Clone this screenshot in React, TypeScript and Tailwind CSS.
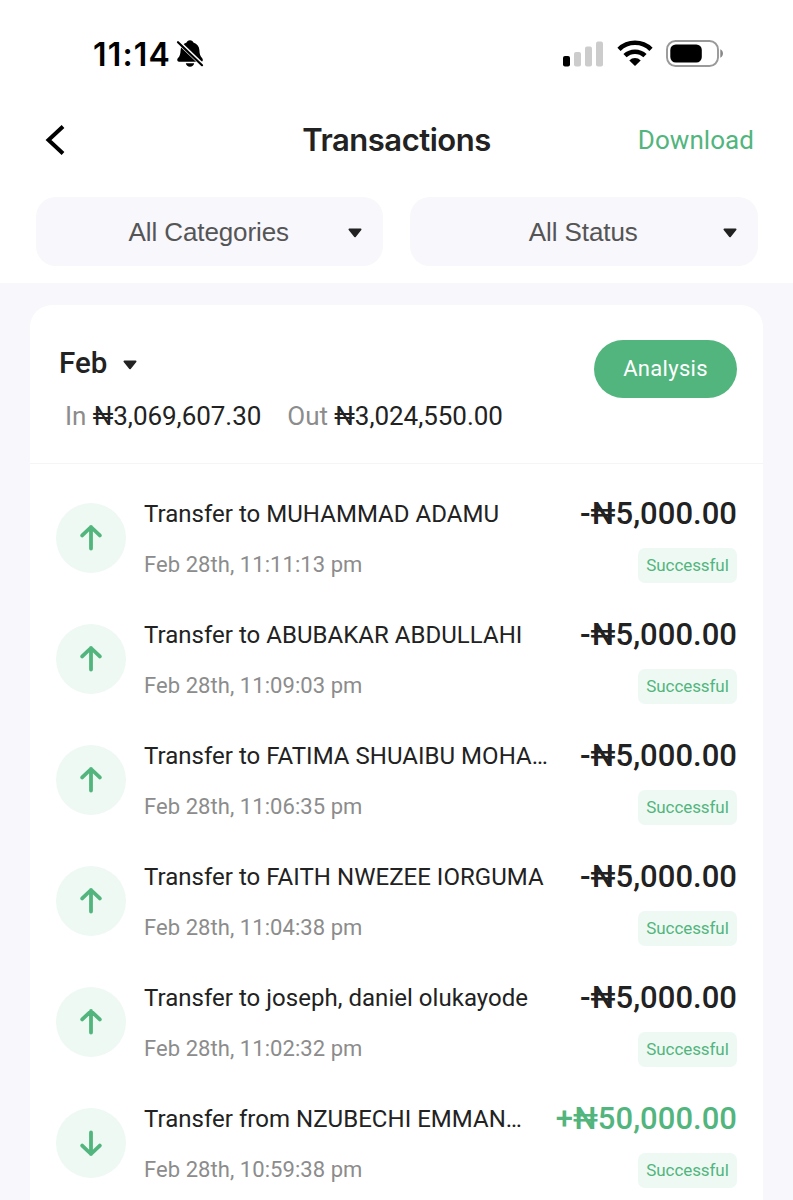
type Transaction = {
  title: string;
  time: string;
  amount: string;
  incoming?: boolean;
};

const TRANSACTIONS: Transaction[] = [
  { title: "Transfer to MUHAMMAD ADAMU", time: "Feb 28th, 11:11:13 pm", amount: "-₦5,000.00" },
  { title: "Transfer to ABUBAKAR ABDULLAHI", time: "Feb 28th, 11:09:03 pm", amount: "-₦5,000.00" },
  { title: "Transfer to FATIMA SHUAIBU MOHA…", time: "Feb 28th, 11:06:35 pm", amount: "-₦5,000.00" },
  { title: "Transfer to FAITH NWEZEE IORGUMA", time: "Feb 28th, 11:04:38 pm", amount: "-₦5,000.00" },
  { title: "Transfer to joseph, daniel olukayode", time: "Feb 28th, 11:02:32 pm", amount: "-₦5,000.00" },
  { title: "Transfer from NZUBECHI EMMAN…", time: "Feb 28th, 10:59:38 pm", amount: "+₦50,000.00", incoming: true },
];

function Caret() {
  return (
    <svg width="14" height="10" viewBox="0 0 14 10" className="mt-[3px] shrink-0">
      <path d="M1.4 1.4h11.2L7 8.4z" fill="#222" stroke="#222" strokeWidth="1.8" strokeLinejoin="round" />
    </svg>
  );
}

function BellOff() {
  return (
    <svg width="28" height="30" viewBox="0 0 28 30">
      <path d="M14 1.2c1.9 0 3.1 1 3.4 2.4 3.8 1.2 5.8 4 6 7.6.2 3.8.6 5.8 2.8 8 .9.9 1 3.5-1 3.5H3C1 22.7.9 20.2 1.8 19.3c2.2-2.3 2.6-4.3 2.8-8.1.2-3.6 2.2-6.4 6-7.6C10.9 2.2 12.1 1.2 14 1.2z" />
      <path d="M9.8 24.3h8.4c-.5 2.3-2 3.5-4.2 3.5s-3.7-1.2-4.2-3.5z" />
      <path d="M2.4 2.9 26.4 25.9" stroke="#fff" strokeWidth="4.2" />
      <path d="M2 3.2 26 26.2" stroke="#000" strokeWidth="2.2" strokeLinecap="round" />
    </svg>
  );
}

function StatusBar() {
  return (
    <div className="flex h-[108px] items-center justify-between pr-[69px] pl-[93px]">
      <div className="flex items-center gap-[5px]">
        <span className="pt-[2px] font-['Inter',sans-serif] text-[32px] leading-none font-semibold tracking-[1.2px] text-black">
          11:14
        </span>
        <BellOff />
      </div>
      <div className="flex items-center gap-[13px]">
        <svg width="41" height="26" viewBox="0 0 41 26">
          <rect x="0" y="15" width="7" height="10.5" rx="2" fill="#000" />
          <rect x="11" y="11" width="7" height="14.5" rx="2" fill="#ccc" />
          <rect x="22" y="5.5" width="7" height="20" rx="2" fill="#ccc" />
          <rect x="33" y="0.5" width="7" height="25" rx="2" fill="#ccc" />
        </svg>
        <svg width="36" height="27" viewBox="0 0 36 27" fill="none" stroke="#000" strokeWidth="4.6" className="mb-px">
          <path d="M2 9.3a23 23 0 0 1 32 0" />
          <path d="M8 15.7a14.5 14.5 0 0 1 20 0" />
          <path d="M12.3 20.4a8.2 8.2 0 0 1 11.4 0L18 26z" fill="#000" stroke="none" />
        </svg>
        <svg width="58" height="27" viewBox="0 0 58 27" className="mb-px">
          <rect x="1" y="1" width="51" height="25" rx="8.5" fill="none" stroke="#999" strokeWidth="1.9" />
          <rect x="4.3" y="4.5" width="31.5" height="18" rx="5.5" />
          <path d="M54.3 9.3v8.4c3.6-1.5 3.6-6.9 0-8.4z" fill="#888" />
        </svg>
      </div>
    </div>
  );
}

function FilterSelect({ label }: { label: string }) {
  return (
    <button className="flex h-[69px] w-[347.5px] items-center rounded-[20px] bg-[#f7f7fc] pr-[21px]">
      <span className="flex-1 pt-[2px] pl-[34px] text-center font-['Liberation_Sans',sans-serif] text-[26px] tracking-[-0.1px] text-[#555]">
        {label}
      </span>
      <Caret />
    </button>
  );
}

function DirectionIcon({ incoming }: { incoming?: boolean }) {
  return (
    <div className="flex size-[70px] shrink-0 items-center justify-center rounded-full bg-[#eef9f4]">
      <svg
        width="22"
        height="27"
        viewBox="0 0 22 27"
        fill="none"
        stroke="#52b57d"
        strokeWidth="3.8"
        strokeLinecap="round"
        strokeLinejoin="round"
        className={incoming ? "rotate-180" : ""}
      >
        <path d="M11 24.5V3M2.2 11.4 11 3l8.8 8.4" />
      </svg>
    </div>
  );
}

function TransactionRow({ title, time, amount, incoming }: Transaction) {
  return (
    <li className="flex h-[121.1px] items-center px-[26px]">
      <DirectionIcon incoming={incoming} />
      <div className="ml-[18px] flex min-w-0 flex-1 flex-col gap-[19px] pt-[3px] whitespace-nowrap">
        <span className="text-[24px] leading-[32px] tracking-[0.03px] text-[#222]">{title}</span>
        <span className="text-[22px] leading-[32px] tracking-[0.06px] text-[#8c8c8c]">{time}</span>
      </div>
      <div className="flex flex-col items-end gap-[15px] pt-[2px]">
        <span
          className={`text-[31px] leading-[38px] font-medium tracking-[0.03px] ${incoming ? "text-[#52b57d]" : "text-[#222]"}`}
        >
          {amount}
        </span>
        <span className="flex h-[35px] w-[99px] items-center justify-center rounded-[7px] bg-[#eef9f4] pt-px text-[17px] tracking-[-0.08px] text-[#52b57d]">
          Successful
        </span>
      </div>
    </li>
  );
}

export default function App() {
  return (
    <div className="h-[1200px] w-[793px] overflow-hidden bg-[#f7f7fc] font-['Roboto',sans-serif]">
      <header className="h-[283px] bg-white">
        <StatusBar />
        <div className="flex h-[64px] items-center px-[39px]">
          <div className="flex-1">
            <svg width="21" height="30" viewBox="0 0 21 30" fill="none" stroke="#000" strokeWidth="4" className="ml-[6px]">
              <path d="M18 1.5 3.5 15 18 28.5" />
            </svg>
          </div>
          <h1 className="font-['Inter',sans-serif] text-[31px] font-semibold tracking-[-0.5px] text-[#222]">Transactions</h1>
          <span className="flex-1 text-right text-[26px] tracking-[0.05px] text-[#52b57d]">Download</span>
        </div>
        <div className="mt-[25px] flex justify-between px-[35.5px]">
          <FilterSelect label="All Categories" />
          <FilterSelect label="All Status" />
        </div>
      </header>

      <main className="mt-[22px] ml-[30px] w-[733px] rounded-t-[22px] bg-white">
        <section className="flex h-[159px] items-start justify-between border-b border-[#f5f5f6] pt-[35px] pr-[26px] pl-[29px]">
          <div>
            <div className="flex h-[46px] items-center gap-[16px]">
              <span className="text-[29.5px] font-medium text-[#222]">Feb</span>
              <Caret />
            </div>
            <div className="mt-[12px] flex gap-[26px] pl-[6px] text-[26px] leading-[36px] tracking-[-0.05px] whitespace-nowrap text-[#222]">
              <p>
                <span className="text-[#8c8c8c]">In</span> ₦3,069,607.30
              </p>
              <p>
                <span className="text-[#8c8c8c]">Out</span> ₦3,024,550.00
              </p>
            </div>
          </div>
          <button className="h-[58px] w-[143px] rounded-[29px] bg-[#52b57d] pb-[2px] text-[22px] tracking-[0.3px] text-white">
            Analysis
          </button>
        </section>
        <ul className="pt-[13px]">
          {TRANSACTIONS.map((t) => (
            <TransactionRow key={t.time} {...t} />
          ))}
        </ul>
      </main>
    </div>
  );
}
